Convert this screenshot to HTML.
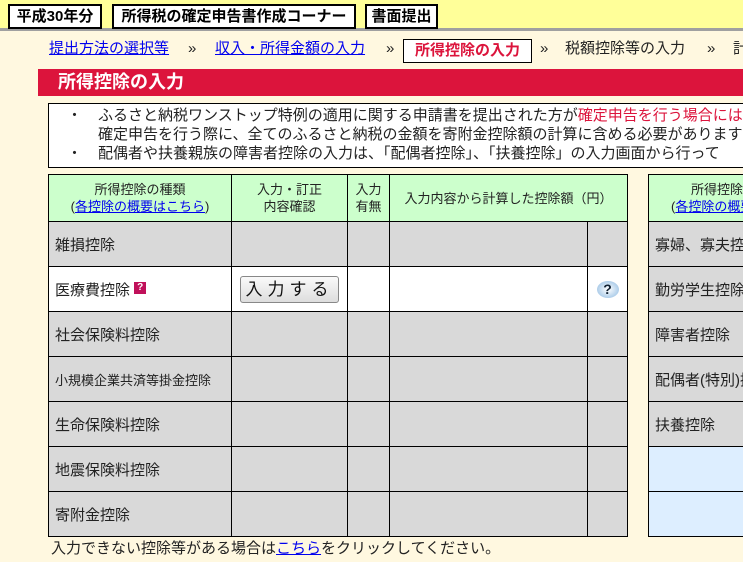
<!DOCTYPE html>
<html><head><meta charset="utf-8"><style>
*{margin:0;padding:0;box-sizing:border-box}
body{width:743px;height:562px;overflow:hidden;background:#fff8e0;font-family:"Liberation Sans","Noto Sans CJK JP",sans-serif;font-size:15px;color:#222;position:relative}
.top{position:absolute;left:0;top:0;width:743px;height:31px;background:#ffff99;border-bottom:3px solid #a0a0a0}
.tb{position:absolute;top:4px;height:25px;border:2px solid #000;background:#fff;font-weight:bold;font-size:15px;line-height:21px;text-align:center;color:#000;white-space:nowrap;overflow:hidden}
.bc{position:absolute;top:39px;font-size:15px;line-height:20px;white-space:nowrap}
.bc a{color:#0000ee;text-decoration:underline}
.act{position:absolute;left:403px;top:39px;width:129px;height:24px;border:1px solid #000;background:#fff;color:#dc143c;font-weight:bold;text-align:center;line-height:22px;white-space:nowrap}
.red{position:absolute;left:38px;top:69px;width:705px;height:27px;background:#dc143c;color:#fff;font-weight:bold;font-size:18px;line-height:26px;padding-left:20px;white-space:nowrap}
.note{position:absolute;left:48px;top:103px;width:720px;height:65px;background:#fff;border:1px solid #000;font-size:15px;line-height:19px;padding-top:2px;white-space:nowrap;color:#222}
.note div{padding-left:49px;position:relative}
.note .d:before{content:"・";position:absolute;left:18px}
table{position:absolute;border-collapse:collapse;top:174px}
td{border:1px solid #000;height:45px;background:#d9d9d9;padding-left:6px;font-size:15px;white-space:nowrap}
th{border:1px solid #000;background:#ccffcc;font-weight:normal;font-size:13px;line-height:17px;height:47px;color:#222;white-space:nowrap}
th a{color:#0000ee}
.w td{background:#fff}
.b td{background:#ddeeff}
.btn{display:inline-block;width:99px;height:27px;border:1px solid #888;border-radius:3px;background:linear-gradient(#fafafa,#ddd);font-size:17px;letter-spacing:5px;text-align:center;line-height:25px;color:#111;margin-left:2px}
</style></head><body>
<div class="top"></div>
<div class="tb" style="left:8px;width:94px">平成30年分</div>
<div class="tb" style="left:112px;width:244px">所得税の確定申告書作成コーナー</div>
<div class="tb" style="left:365px;width:73px">書面提出</div>
<div class="bc" style="left:49px"><a>提出方法の選択等</a></div>
<div class="bc" style="left:188px">»</div>
<div class="bc" style="left:215px"><a>収入・所得金額の入力</a></div>
<div class="bc" style="left:386px">»</div>
<div class="act">所得控除の入力</div>
<div class="bc" style="left:540px">»</div>
<div class="bc" style="left:565px">税額控除等の入力</div>
<div class="bc" style="left:707px">»</div>
<div class="bc" style="left:733px">計</div>
<div class="red">所得控除の入力</div>
<div class="note">
<div class="d">ふるさと納税ワンストップ特例の適用に関する申請書を提出された方が<span style="color:#dc143c">確定申告を行う場合には</span></div>
<div>確定申告を行う際に、全てのふるさと納税の金額を寄附金控除額の計算に含める必要があります</div>
<div class="d">配偶者や扶養親族の障害者控除の入力は、「配偶者控除」、「扶養控除」の入力画面から行って</div>
</div>
<table style="left:48px;width:580px">
<tr><th style="width:183px">所得控除の種類<br>(<a><u>各控除の概要はこちら</u></a>)</th><th style="width:116px">入力・訂正<br>内容確認</th><th style="width:42px">入力<br>有無</th><th colspan="2">入力内容から計算した控除額（円）</th></tr>
<tr><td>雑損控除</td><td></td><td></td><td style="width:198px"></td><td style="width:40px"></td></tr>
<tr class="w"><td>医療費控除 <span style="display:inline-block;width:12px;height:12px;background:#c0105a;color:#fff;font-size:10px;line-height:12px;text-align:center;font-weight:bold;vertical-align:5px">?</span></td><td><span class="btn">入力する</span></td><td></td><td></td><td style="text-align:center;padding:0"><span style="display:inline-block;width:22px;height:17px;border-radius:50%;background:radial-gradient(#fff,#8bb8e0);color:#123;font-weight:bold;font-size:14px;line-height:17px">?</span></td></tr>
<tr><td>社会保険料控除</td><td></td><td></td><td></td><td></td></tr>
<tr><td style="font-size:13px">小規模企業共済等掛金控除</td><td></td><td></td><td></td><td></td></tr>
<tr><td>生命保険料控除</td><td></td><td></td><td></td><td></td></tr>
<tr><td>地震保険料控除</td><td></td><td></td><td></td><td></td></tr>
<tr><td>寄附金控除</td><td></td><td></td><td></td><td></td></tr>
</table>
<table style="left:648px;width:200px">
<tr><th style="text-align:left;padding-left:42px">所得控除の種類<br><span style="margin-left:-20px">(<a><u>各控除の概要はこちら</u></a>)</span></th></tr>
<tr><td>寡婦、寡夫控除</td></tr>
<tr><td>勤労学生控除</td></tr>
<tr><td>障害者控除</td></tr>
<tr><td>配偶者(特別)控除</td></tr>
<tr><td>扶養控除</td></tr>
<tr class="b"><td></td></tr>
<tr class="b"><td></td></tr>
</table>
<div style="position:absolute;left:51px;top:540px;font-size:15px;line-height:18px;white-space:nowrap">入力できない控除等がある場合は<a style="color:#0000ee;text-decoration:underline">こちら</a>をクリックしてください。</div>
</body></html>
